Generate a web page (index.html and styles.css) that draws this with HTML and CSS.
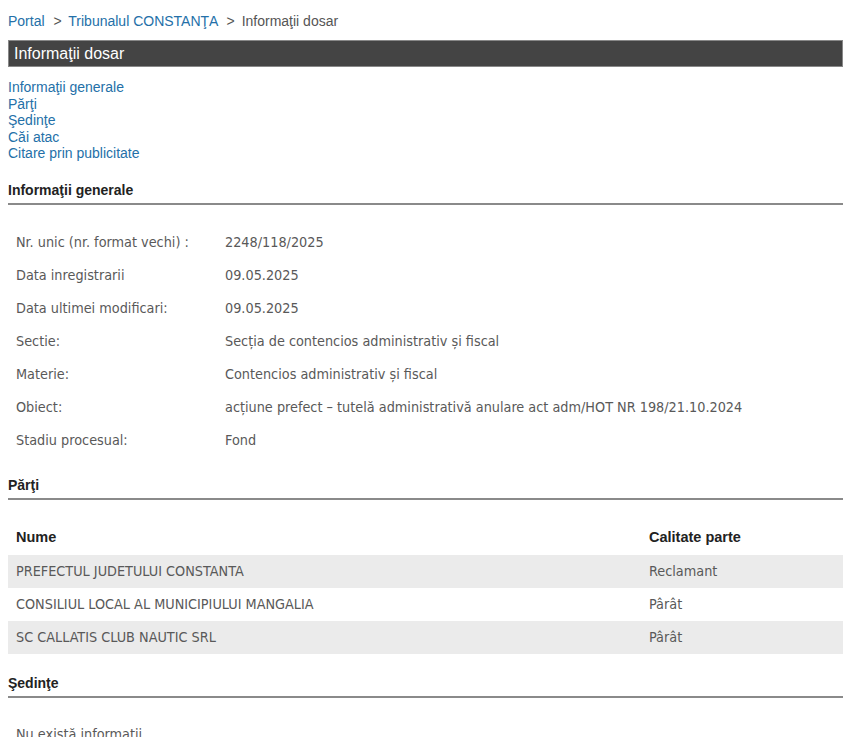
FILE: index.html
```html
<!DOCTYPE html>
<html lang="ro">
<head>
    <meta charset="UTF-8">
    <title>Informaţii dosar</title>
    <link rel="stylesheet" href="styles.css">
</head>
<body>
    <div class="page">
        <div class="breadcrumb">
            <a href="#">Portal</a>
            <span class="sep">&gt;</span>
            <a href="#">Tribunalul CONSTANŢA</a>
            <span class="sep">&gt;</span>
            <span class="current">Informaţii dosar</span>
        </div>

        <div class="title-bar">Informaţii dosar</div>

        <ul class="toc">
            <li><a href="#generale">Informaţii generale</a></li>
            <li><a href="#parti">Părţi</a></li>
            <li><a href="#sedinte">Şedinţe</a></li>
            <li><a href="#cai">Căi atac</a></li>
            <li><a href="#citare">Citare prin publicitate</a></li>
        </ul>

        <div class="section first" id="generale">
            <h3>Informaţii generale</h3>
            <table class="info">
                <tr><td class="label">Nr. unic (nr. format vechi) :</td><td>2248/118/2025</td></tr>
                <tr><td class="label">Data inregistrarii</td><td>09.05.2025</td></tr>
                <tr><td class="label">Data ultimei modificari:</td><td>09.05.2025</td></tr>
                <tr><td class="label">Sectie:</td><td>Secția de contencios administrativ și fiscal</td></tr>
                <tr><td class="label">Materie:</td><td>Contencios administrativ și fiscal</td></tr>
                <tr><td class="label">Obiect:</td><td>acțiune prefect – tutelă administrativă anulare act adm/HOT NR 198/21.10.2024</td></tr>
                <tr><td class="label">Stadiu procesual:</td><td>Fond</td></tr>
            </table>
        </div>

        <div class="section" id="parti">
            <h3>Părţi</h3>
            <table class="grid">
                <tr class="head"><th>Nume</th><th class="quality">Calitate parte</th></tr>
                <tr class="odd"><td>PREFECTUL JUDETULUI CONSTANTA</td><td>Reclamant</td></tr>
                <tr><td>CONSILIUL LOCAL AL MUNICIPIULUI MANGALIA</td><td>Pârât</td></tr>
                <tr class="odd"><td>SC CALLATIS CLUB NAUTIC SRL</td><td>Pârât</td></tr>
            </table>
        </div>

        <div class="section" id="sedinte">
            <h3>Şedinţe</h3>
            <table class="info">
                <tr><td>Nu există informaţii</td></tr>
            </table>
        </div>
    </div>
</body>
</html>
```

FILE: styles.css
```css
body {
    margin: 8px;
    font-family: "Liberation Sans", Arial, sans-serif;
    font-size: 14px;
    color: #333;
    background: #fff;
}

a {
    color: #2470a8;
    text-decoration: none;
}

.page {
    width: 835px;
}

.breadcrumb {
    height: 26px;
    line-height: 26px;
    color: #555;
}

.breadcrumb .sep {
    margin: 0 3px 0 5px;
}

.title-bar {
    margin-top: 6px;
    height: 25px;
    line-height: 25px;
    padding: 0 5px;
    background-color: #444;
    border: 1px solid #888;
    color: #fff;
    font-size: 16px;
}

.toc {
    list-style: none;
    margin: 12px 0 0 0;
    padding: 0;
}

.toc li {
    line-height: 16.5px;
}

.section {
    margin-top: 21px;
}

.section.first {
    margin-top: 20px;
}

#parti {
    margin-top: 20px;
}

.section h3 {
    margin: 0;
    font-size: 14px;
    line-height: 16px;
    color: #222;
    padding-bottom: 5px;
    border-bottom: 2px solid #8a8a8a;
}

.info,
.grid {
    width: 100%;
    border-collapse: collapse;
    margin-top: 20px;
    font-family: "DejaVu Sans Condensed", "DejaVu Sans", sans-serif;
    font-size: 14.3px;
    color: #595959;
}

.first .info {
    margin-top: 21px;
}

.info td,
.grid td {
    height: 33px;
    padding: 0 8px;
    vertical-align: middle;
}

.info td.label {
    width: 193px;
}

.grid th {
    height: 35px;
    padding: 0 8px;
    text-align: left;
    font-family: "Liberation Sans", Arial, sans-serif;
    font-size: 14.5px;
    color: #222;
}

.grid th.quality {
    width: 186px;
}

.grid tr.odd td {
    background-color: #ebebeb;
}
```
